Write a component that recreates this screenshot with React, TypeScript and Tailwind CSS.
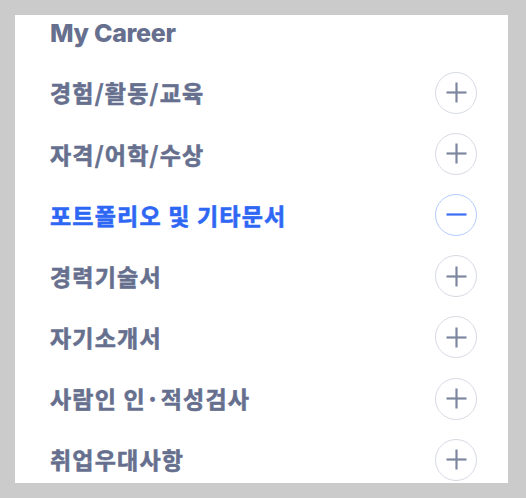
const items = [
  { label: '경험/활동/교육' },
  { label: '자격/어학/수상' },
  { label: '포트폴리오 및 기타문서', active: true },
  { label: '경력기술서' },
  { label: '자기소개서' },
  { label: '사람인 인·적성검사' },
  { label: '취업우대사항' },
]

function CircleIcon({ active }: { active?: boolean }) {
  return (
    <span
      className={
        'flex h-[42px] w-[42px] items-center justify-center rounded-full border-[1.5px] ' +
        (active ? 'border-[#b4ccfb]' : 'border-[#d6dae3]')
      }
    >
      <svg width="21" height="21" viewBox="0 0 21 21" fill="none">
        <path d="M0.5 10.5h20" stroke={active ? '#3a6ef2' : '#7d879f'} strokeWidth="2.2" />
        {!active && <path d="M10.5 0.5v20" stroke="#7d879f" strokeWidth="2.2" />}
      </svg>
    </span>
  )
}

export default function App() {
  return (
    <div className="min-h-screen bg-[#cbcbcb] pt-[15px] pl-[15px] pr-[18px]">
      <div
        className="h-[468px] overflow-hidden bg-white pl-[35px] pr-[31px]"
        style={{ fontFamily: 'Inter, "Noto Sans CJK KR", sans-serif' }}
      >
        <div className="h-[47px] pt-[1px]">
          <h2 className="text-[25px] font-extrabold leading-[34px] tracking-[-0.3px] text-[#66708e]">
            My Career
          </h2>
        </div>
        <ul>
          {items.map((it) => (
            <li key={it.label} className="flex h-[61.2px] items-center justify-between">
              <span
                className={
                  'text-[23px] font-bold tracking-[1.2px] [-webkit-text-stroke:0.6px_currentColor] ' +
                  (it.active ? 'text-[#2e67f4]' : 'text-[#66708e]')
                }
                style={{ fontFamily: '"Noto Sans CJK KR", sans-serif' }}
              >
                {it.label}
              </span>
              <CircleIcon active={it.active} />
            </li>
          ))}
        </ul>
      </div>
    </div>
  )
}
